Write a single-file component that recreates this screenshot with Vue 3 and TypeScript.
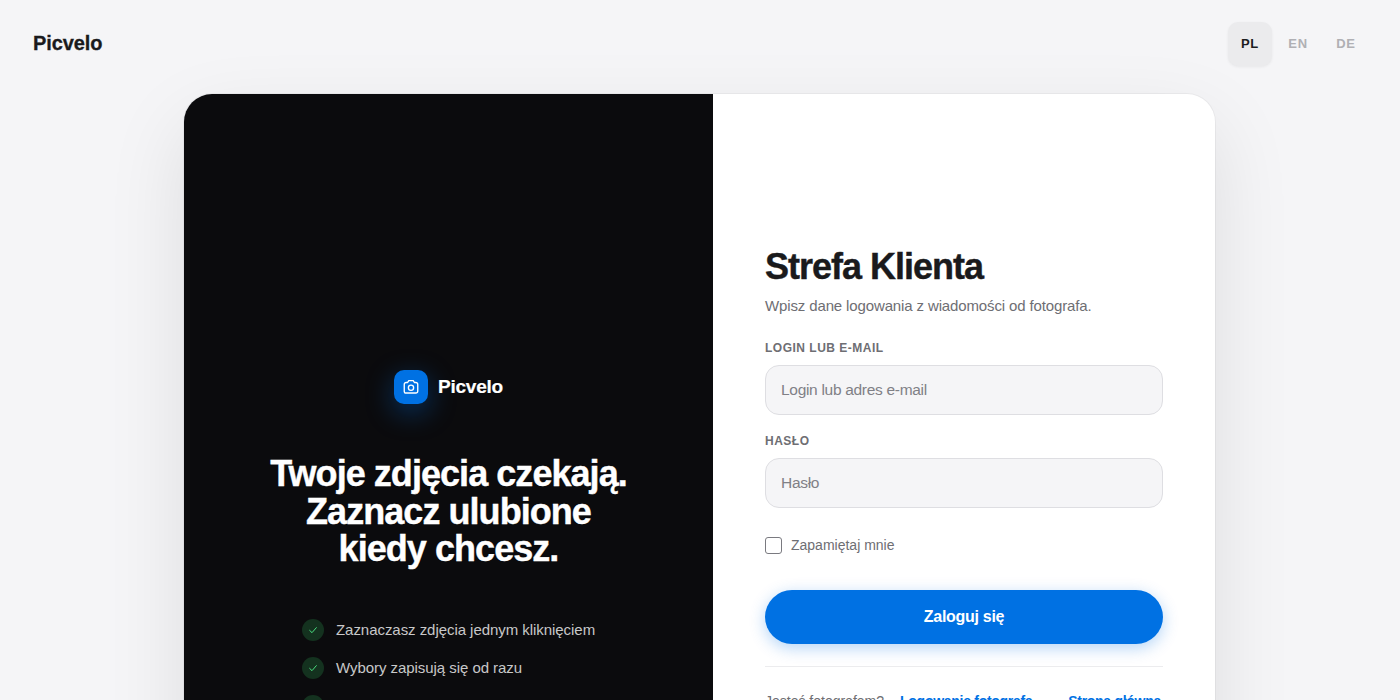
<script setup lang="ts">
const langs = [
  { code: 'PL', active: true },
  { code: 'EN', active: false },
  { code: 'DE', active: false },
]
const features = [
  'Zaznaczasz zdjęcia jednym kliknięciem',
  'Wybory zapisują się od razu',
  'Dostęp z telefonu i komputera',
]
</script>

<template>
  <div class="page">
    <header class="top">
      <div class="brand">Picvelo</div>
      <nav class="langs">
        <button v-for="l in langs" :key="l.code" class="lang" :class="{ active: l.active }">{{ l.code }}</button>
      </nav>
    </header>
    <div class="stage">
      <main class="card">
        <section class="promo">
          <div class="logo">
            <span class="logo-tile">
              <svg width="18" height="18" viewBox="0 0 24 24" fill="none" stroke="#fff" stroke-width="1.800" stroke-linecap="round" stroke-linejoin="round">
                <path d="M3 8.500A2.500 2.500 0 0 1 5.500 6H7.500L9 3.500H15L16.500 6H18.500A2.500 2.500 0 0 1 21 8.500V17.500A2.500 2.500 0 0 1 18.500 20H5.500A2.500 2.500 0 0 1 3 17.500Z" />
                <circle cx="12" cy="13" r="3.500" />
              </svg>
            </span>
            <span class="logo-name">Picvelo</span>
          </div>
          <h2 class="headline">Twoje zdjęcia czekają.<br />Zaznacz ulubione<br />kiedy chcesz.</h2>
          <ul class="features">
            <li v-for="f in features" :key="f">
              <span class="tick">
                <svg width="10" height="10" viewBox="0 0 12 12" fill="none" stroke="#4ade80" stroke-width="1.200" stroke-linecap="round" stroke-linejoin="round">
                  <path d="M2 6.500L4.800 9.200L10 3.200" />
                </svg>
              </span>
              {{ f }}
            </li>
          </ul>
        </section>
        <section class="form-side">
          <h1 class="title">Strefa Klienta</h1>
          <p class="sub">Wpisz dane logowania z wiadomości od fotografa.</p>
          <form class="form" @submit.prevent>
            <label class="field">
              <span class="label">LOGIN LUB E-MAIL</span>
              <input class="input" type="text" placeholder="Login lub adres e-mail" />
            </label>
            <label class="field">
              <span class="label">HASŁO</span>
              <input class="input" type="password" placeholder="Hasło" />
            </label>
            <label class="remember">
              <span class="box"></span>
              <span>Zapamiętaj mnie</span>
            </label>
            <button class="submit" type="submit">Zaloguj się</button>
          </form>
          <div class="foot">
            <span class="foot-left">
              <span class="muted">Jesteś fotografem?</span>
              <a class="link">Logowanie fotografa</a>
            </span>
            <a class="link">Strona główna</a>
          </div>
        </section>
      </main>
    </div>
  </div>
</template>

<style>
html, body { margin: 0; background: #f5f5f7; overflow: hidden; }
</style>

<style scoped>
.page {
  min-height: 700px;
  background: #f5f5f7;
  font-family: "Liberation Sans", Arial, sans-serif;
  color: #1d1d1f;
}
.top {
  display: flex;
  justify-content: space-between;
  align-items: center;
  height: 44px;
  padding: 22px 32px 28px 33px;
}
.brand {
  font-size: 20px;
  line-height: 42px;
  height: 44px;
  font-weight: 700;
  letter-spacing: -0.1px;
  color: #1a1a1c;
  -webkit-text-stroke: 0.3px #1a1a1c;
}
.langs { display: flex; gap: 4px; }
.lang {
  width: 44px;
  height: 44px;
  border: 0;
  border-radius: 10px;
  background: transparent;
  font: 700 13px "Liberation Sans", Arial, sans-serif;
  letter-spacing: 0.8px;
  color: #b0b0b4;
  padding: 0 0 2px;
}
.lang.active {
  background: #ebebed;
  color: #1d1d1f;
  box-shadow: 0 1px 3px rgba(0, 0, 0, 0.06);
}
.stage { padding: 0 185px 0 184px; }
.card {
  display: flex;
  height: 772px;
  border-radius: 28px;
  overflow: hidden;
  background: #fff;
  box-shadow: 0 0 0 1px rgba(0, 0, 0, 0.04), 0 30px 80px rgba(0, 0, 0, 0.1);
}
.promo {
  width: 529px;
  flex: none;
  box-sizing: border-box;
  padding-top: 276px;
  background: #0b0b0d;
  display: flex;
  flex-direction: column;
  align-items: center;
  color: #fff;
}
.logo { display: flex; align-items: center; gap: 10px; }
.logo-tile {
  width: 34px;
  height: 34px;
  border-radius: 10px;
  background: #0071e3;
  display: flex;
  align-items: center;
  justify-content: center;
  box-shadow: 0 8px 28px rgba(0, 113, 227, 0.4);
}
.logo-name {
  font-size: 19px;
  font-weight: 700;
  letter-spacing: -0.25px;
  -webkit-text-stroke: 0.2px #fff;
}
.headline {
  margin: 51px 0 0;
  font-size: 36px;
  line-height: 37.500px;
  font-weight: 700;
  letter-spacing: -0.95px;
  text-align: center;
  -webkit-text-stroke: 0.4px #fff;
}
.features {
  list-style: none;
  margin: 51px 0 0 118px;
  padding: 0;
  display: flex;
  flex-direction: column;
  gap: 16px;
  align-self: flex-start;
}
.features li {
  display: flex;
  align-items: center;
  gap: 12px;
  height: 22px;
  font-size: 15px;
  letter-spacing: -0.05px;
  color: rgba(255, 255, 255, 0.78);
}
.tick {
  width: 22px;
  height: 22px;
  border-radius: 50%;
  background: #14321f;
  display: flex;
  align-items: center;
  justify-content: center;
}
.form-side {
  flex: 1;
  box-sizing: border-box;
  padding: 151px 52px 0;
  display: flex;
  flex-direction: column;
}
.title {
  margin: 0;
  font-size: 36px;
  line-height: 44px;
  font-weight: 700;
  letter-spacing: -1px;
  color: #1a1a1c;
  -webkit-text-stroke: 0.4px #1a1a1c;
}
.sub {
  margin: 6px 0 0;
  font-size: 15px;
  line-height: 22px;
  letter-spacing: -0.13px;
  color: #6e6e73;
}
.form { display: flex; flex-direction: column; margin-top: 23px; }
.field { display: flex; flex-direction: column; gap: 9px; margin-bottom: 18px; }
.label {
  font-size: 12px;
  line-height: 16px;
  font-weight: 700;
  letter-spacing: 0.5px;
  color: #6e6e73;
}
.input {
  height: 50px;
  box-sizing: border-box;
  border: 1px solid #dedee2;
  border-radius: 14px;
  background: #f5f5f7;
  padding: 0 15px;
  font: 15.500px "Liberation Sans", Arial, sans-serif;
  letter-spacing: -0.3px;
  outline: none;
}
.input::placeholder { color: #808086; opacity: 1; }
.remember {
  display: flex;
  align-items: center;
  gap: 9px;
  margin-top: 9px;
  font-size: 14px;
  line-height: 20px;
  color: #6e6e73;
}
.box {
  width: 15px;
  height: 15px;
  border: 1.500px solid #7a7a80;
  border-radius: 3px;
  background: #fff;
}
.submit {
  height: 54px;
  margin-top: 35px;
  border: 0;
  border-radius: 27px;
  background: #0071e3;
  color: #fff;
  font: 700 16px "Liberation Sans", Arial, sans-serif;
  letter-spacing: -0.3px;
  box-shadow: 0 4px 16px rgba(0, 113, 227, 0.3);
}
.foot {
  display: flex;
  justify-content: space-between;
  margin-top: 22px;
  padding: 25px 2px 0 0;
  border-top: 1px solid #ececee;
  font-size: 14px;
  line-height: 18px;
}
.foot-left { display: flex; gap: 16px; }
.muted { color: #6e6e73; }
.link { color: #0071e3; font-weight: 700; letter-spacing: -0.28px; }
</style>
